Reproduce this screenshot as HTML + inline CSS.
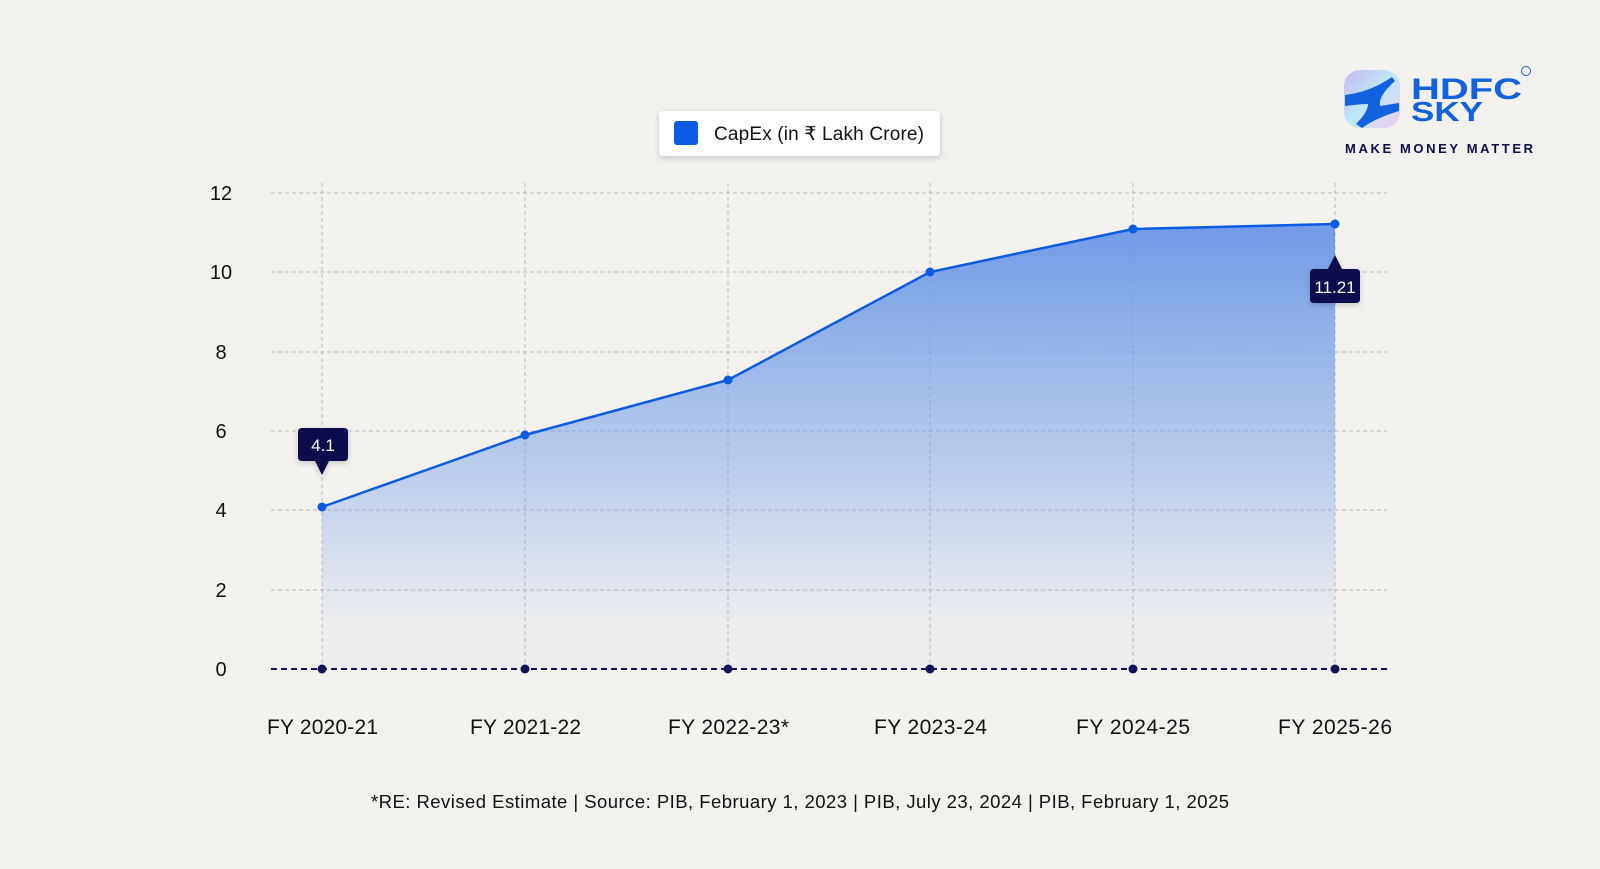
<!DOCTYPE html>
<html><head><meta charset="utf-8"><style>
body{margin:0;width:1600px;height:869px;background:#f2f1ee;font-family:"Liberation Sans",sans-serif;overflow:hidden;position:relative}
</style></head><body>
<svg width="1600" height="869" style="position:absolute;left:0;top:0">
<defs>
<linearGradient id="g" gradientUnits="userSpaceOnUse" x1="0" y1="220" x2="0" y2="620">
<stop offset="0" stop-color="#6f9ae8"/><stop offset="1" stop-color="#6f9ae8" stop-opacity="0.06"/></linearGradient>
<linearGradient id="lg" x1="0" y1="0" x2="1" y2="1"><stop offset="0" stop-color="#c9b8f5"/><stop offset="0.5" stop-color="#bde9f7"/><stop offset="1" stop-color="#f2c8ee"/></linearGradient>
<filter id="s" x="-20%" y="-20%" width="140%" height="160%"><feDropShadow dx="0" dy="2" stdDeviation="3" flood-opacity="0.18"/></filter>
</defs>
<g stroke="#b9b9b9" stroke-dasharray="4 3" stroke-width="1">
<line x1="271" x2="1387" y1="193" y2="193"/><line x1="271" x2="1387" y1="272" y2="272"/><line x1="271" x2="1387" y1="352" y2="352"/><line x1="271" x2="1387" y1="431" y2="431"/><line x1="271" x2="1387" y1="510" y2="510"/><line x1="271" x2="1387" y1="590" y2="590"/>
<line x1="322" x2="322" y1="183" y2="669"/><line x1="525" x2="525" y1="183" y2="669"/><line x1="728" x2="728" y1="183" y2="669"/><line x1="930" x2="930" y1="183" y2="669"/><line x1="1133" x2="1133" y1="183" y2="669"/><line x1="1335" x2="1335" y1="183" y2="669"/>
</g>
<path d="M322 507 L525 435 L728 380 L930 272 L1133 229 L1335 224 L1335 669 L322 669Z" fill="url(#g)"/>
<path d="M322 507 L525 435 L728 380 L930 272 L1133 229 L1335 224" fill="none" stroke="#0b5be3" stroke-width="2.5"/>
<g fill="#0b5be3"><circle cx="322" cy="507" r="4.5"/><circle cx="525" cy="435" r="4.5"/><circle cx="728" cy="380" r="4.5"/><circle cx="930" cy="272" r="4.5"/><circle cx="1133" cy="229" r="4.5"/><circle cx="1335" cy="224" r="4.5"/></g>
<line x1="271" x2="1387" y1="669" y2="669" stroke="#12145a" stroke-width="2" stroke-dasharray="6 4"/>
<g fill="#12145a"><circle cx="322" cy="669" r="4.5"/><circle cx="525" cy="669" r="4.5"/><circle cx="728" cy="669" r="4.5"/><circle cx="930" cy="669" r="4.5"/><circle cx="1133" cy="669" r="4.5"/><circle cx="1335" cy="669" r="4.5"/></g>
<g filter="url(#s)" fill="#0a0d4e">
<path d="M302 428 H344 Q348 428 348 432 V457 Q348 461 344 461 H329 L322 475 L315 461 H302 Q298 461 298 457 V432 Q298 428 302 428Z"/>
<path d="M1314 269 H1328 L1335 255 L1342 269 H1356 Q1360 269 1360 273 V299 Q1360 303 1356 303 H1314 Q1310 303 1310 299 V273 Q1310 269 1314 269Z"/>
</g>
<text x="323" y="451" fill="#fff" font-size="17" text-anchor="middle" font-family="Liberation Sans">4.1</text>
<text x="1335" y="293" fill="#fff" font-size="17" text-anchor="middle" font-family="Liberation Sans">11.21</text>
<rect x="659" y="111" width="281" height="45" rx="4" fill="#fff" filter="url(#s)"/>
<rect x="674" y="121" width="24" height="24" rx="3" fill="#0b5be3"/>
<text x="714" y="140" font-size="19" fill="#111" font-family="Liberation Sans" textLength="210">CapEx (in ₹ Lakh Crore)</text>
<g font-size="20" fill="#111" text-anchor="middle" font-family="Liberation Sans">
<text x="221" y="200">12</text><text x="221" y="279">10</text><text x="221" y="359">8</text><text x="221" y="438">6</text><text x="221" y="517">4</text><text x="221" y="597">2</text><text x="221" y="676">0</text>
</g>
<g font-size="21" fill="#111" font-family="Liberation Sans">
<text x="267" y="734" textLength="111">FY 2020-21</text><text x="470" y="734" textLength="111">FY 2021-22</text><text x="668" y="734" textLength="121">FY 2022-23*</text><text x="874" y="734" textLength="113">FY 2023-24</text><text x="1076" y="734" textLength="114">FY 2024-25</text><text x="1278" y="734" textLength="114">FY 2025-26</text>
<text x="371" y="808" font-size="18.5" textLength="858">*RE: Revised Estimate |  Source: PIB, February 1, 2023  |  PIB, July 23, 2024  |  PIB, February 1, 2025</text>
</g>
<rect x="1344" y="70" width="56" height="58" rx="16" fill="url(#lg)"/>
<path d="M1345 95 Q1370 92 1392 77 L1395 81 Q1378 96 1380 106 L1399 103 L1399 111 Q1376 118 1362 128 L1356 124 Q1368 112 1368 104 Q1360 104 1345 106Z" fill="#1262e0"/>
<text x="1411" y="99" font-size="30" fill="#1262e0" font-weight="bold" font-family="Liberation Sans" textLength="111" lengthAdjust="spacingAndGlyphs">HDFC</text>
<text x="1411" y="121" font-size="28" fill="#1262e0" font-weight="bold" font-family="Liberation Sans" textLength="72" lengthAdjust="spacingAndGlyphs">SKY</text>
<circle cx="1526" cy="71" r="4.5" fill="none" stroke="#1262e0" stroke-width="1"/>
<text x="1345" y="153" font-size="13" fill="#0a0d4e" font-weight="bold" font-family="Liberation Sans" textLength="188">MAKE MONEY MATTER</text>
</svg>
</body></html>
